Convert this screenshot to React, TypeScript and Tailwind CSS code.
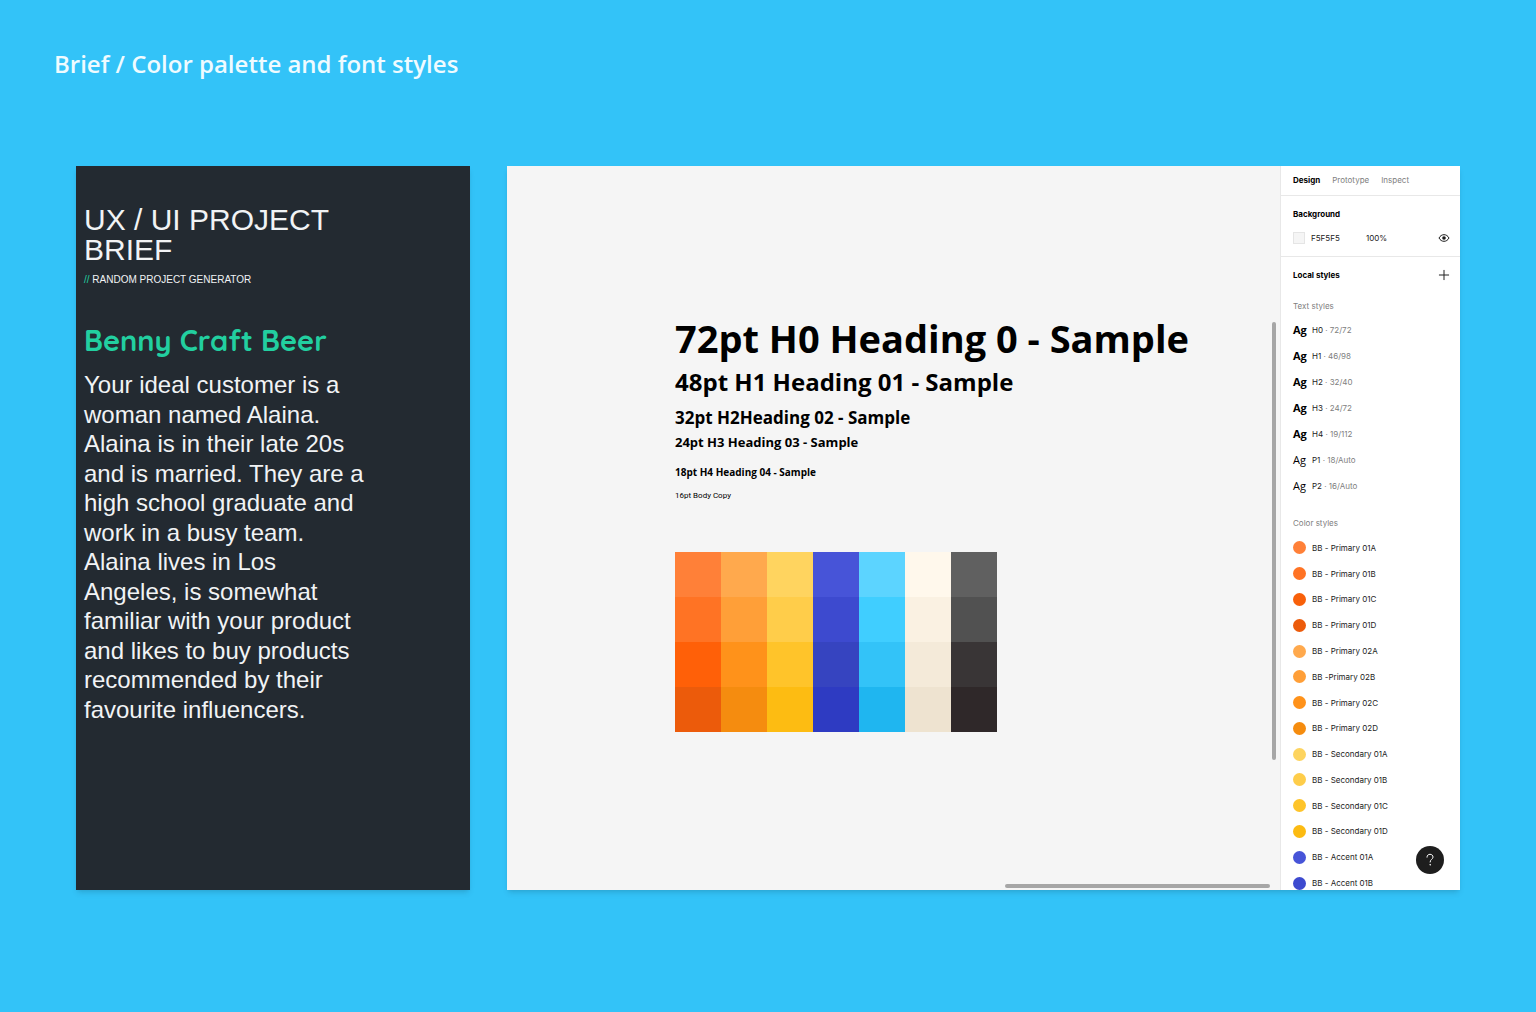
import { Plus } from 'lucide-react';

interface TextStyle {
  name: string;
  size: string;
  weight: string;
}

interface ColorStyle {
  name: string;
  color: string;
}

const textStyles: TextStyle[] = [
  { name: 'H0', size: '72/72', weight: 'font-bold' },
  { name: 'H1', size: '46/98', weight: 'font-bold' },
  { name: 'H2', size: '32/40', weight: 'font-bold' },
  { name: 'H3', size: '24/72', weight: 'font-bold' },
  { name: 'H4', size: '19/112', weight: 'font-bold' },
  { name: 'P1', size: '18/Auto', weight: 'font-medium' },
  { name: 'P2', size: '16/Auto', weight: 'font-normal' },
];

const colorStyles: ColorStyle[] = [
  { name: 'BB - Primary 01A', color: 'bg-[#ff8038]' },
  { name: 'BB - Primary 01B', color: 'bg-[#ff7324]' },
  { name: 'BB - Primary 01C', color: 'bg-[#f8600a]' },
  { name: 'BB - Primary 01D', color: 'bg-[#ec5b0b]' },
  { name: 'BB - Primary 02A', color: 'bg-[#ffa94d]' },
  { name: 'BB -Primary 02B', color: 'bg-[#ff9f38]' },
  { name: 'BB - Primary 02C', color: 'bg-[#ff921a]' },
  { name: 'BB - Primary 02D', color: 'bg-[#f58c0f]' },
  { name: 'BB - Secondary 01A', color: 'bg-[#fdd45f]' },
  { name: 'BB - Secondary 01B', color: 'bg-[#fecd4a]' },
  { name: 'BB - Secondary 01C', color: 'bg-[#fec42a]' },
  { name: 'BB - Secondary 01D', color: 'bg-[#fcbb12]' },
  { name: 'BB - Accent 01A', color: 'bg-[#4754d8]' },
  { name: 'BB - Accent 01B', color: 'bg-[#3d4acf]' },
];

// one entry per column, light to dark
const palette = [
  ['bg-[#ff8038]', 'bg-[#ff7324]', 'bg-[#ff6008]', 'bg-[#ec5b0b]'],
  ['bg-[#ffa94d]', 'bg-[#ff9f38]', 'bg-[#ff921a]', 'bg-[#f58c0f]'],
  ['bg-[#ffd45f]', 'bg-[#ffcd4a]', 'bg-[#ffc42a]', 'bg-[#fdbc12]'],
  ['bg-[#4754d8]', 'bg-[#3d4acf]', 'bg-[#3644c0]', 'bg-[#2e3bc2]'],
  ['bg-[#5cd4ff]', 'bg-[#40ceff]', 'bg-[#33c3f8]', 'bg-[#1fb6f0]'],
  ['bg-[#fff8ec]', 'bg-[#faf1e2]', 'bg-[#f4ead9]', 'bg-[#eee3d0]'],
  ['bg-[#606060]', 'bg-[#515151]', 'bg-[#393536]', 'bg-[#2f2829]'],
];

function EyeIcon() {
  return (
    <svg width="12" height="10" viewBox="0 0 12 10" fill="none" aria-hidden="true">
      <path d="M1 5C2.2 2.8 3.9 1.7 6 1.7S9.8 2.8 11 5C9.8 7.2 8.1 8.3 6 8.3S2.2 7.2 1 5Z" stroke="#1a1a1a" />
      <circle cx="6" cy="5" r="1.8" fill="#1a1a1a" />
    </svg>
  );
}

function HelpIcon() {
  return (
    <svg width="10" height="14" viewBox="0 0 10 14" fill="none" stroke="#fff" strokeLinecap="round" aria-hidden="true">
      <path d="M2 4.2C2 2.4 3.2 1.3 5 1.3S8 2.5 8 4.1C8 6.3 5.1 6.3 5.1 9" />
      <circle cx="5.1" cy="11.8" r="0.3" strokeWidth="0.8" />
    </svg>
  );
}

function BriefPanel() {
  return (
    <section className="bg-[#232a31] px-2 pt-[39px] font-['Liberation_Sans',sans-serif] text-[#f1f3f5] shadow-md">
      <div className="max-w-70">
        <h2 className="text-[30px] leading-[30px]">UX / UI PROJECT BRIEF</h2>
        <p className="mt-[9px] text-[10px] leading-3">
          <span className="text-[#22cfa0]">//</span> RANDOM PROJECT GENERATOR
        </p>
        <h3 className="mt-[34px] font-['Quicksand',Lato,sans-serif] text-[29px] leading-10 font-bold text-[#22cfa0]">
          Benny Craft Beer
        </h3>
        <p className="mt-[10px] text-2xl leading-[1.23]">
          Your ideal customer is a woman named Alaina. Alaina is in their late 20s and is married. They are a high
          school graduate and work in a busy team. Alaina lives in Los Angeles, is somewhat familiar with your product
          and likes to buy products recommended by their favourite influencers.
        </p>
      </div>
    </section>
  );
}

function Canvas() {
  return (
    <div className="relative min-w-0 flex-1 pt-[148px] pl-[168px] whitespace-nowrap text-black">
      <h2 className="text-[38px] leading-12 font-bold">72pt H0 Heading 0 - Sample</h2>
      <h3 className="mt-1 text-2xl leading-8 font-bold">48pt H1 Heading 01 - Sample</h3>
      <h4 className="mt-2 text-[17px] leading-6 font-bold">32pt H2Heading 02 - Sample</h4>
      <h5 className="mt-0.5 text-[13px] leading-5 font-bold">24pt H3 Heading 03 - Sample</h5>
      <h6 className="mt-3 text-[10px] leading-4 font-bold">18pt H4 Heading 04 - Sample</h6>
      <p className="mt-2 font-['Roboto',sans-serif] text-[8px] leading-4">16pt Body Copy</p>

      <div className="mt-12 flex w-[322px]">
        {palette.map((column) => (
          <div key={column[0]} className="flex-1">
            {column.map((shade) => (
              <div key={shade} className={`h-[45px] ${shade}`} />
            ))}
          </div>
        ))}
      </div>

      {/* Scrollbars */}
      <div className="absolute top-[156px] right-1 h-[438px] w-1 rounded-full bg-[#a6a6a6]" />
      <div className="absolute right-[10px] bottom-0.5 h-1 w-[265px] rounded-full bg-[#a6a6a6]" />
    </div>
  );
}

function StylesSidebar() {
  return (
    <aside className="relative flex w-[180px] flex-col overflow-hidden border-l border-[#e8e8e8] bg-white font-['Inter',sans-serif] text-[8px] leading-3 text-[#222]">
      <nav className="flex gap-3 border-b border-[#e8e8e8] px-3 pt-2 pb-[9px] text-[#808080]">
        <button className="font-bold text-black">Design</button>
        <button>Prototype</button>
        <button>Inspect</button>
      </nav>

      <div className="border-b border-[#e8e8e8] px-3 pt-3 pb-3">
        <h4 className="font-bold text-black">Background</h4>
        <div className="mt-3 flex items-center">
          <span className="size-3 border border-[#e5e5e5] bg-[#f5f5f5]" />
          <span className="ml-[6px] w-[55px]">F5F5F5</span>
          <span>100%</span>
          <button className="-mr-0.5 ml-auto" aria-label="Toggle background">
            <EyeIcon />
          </button>
        </div>
      </div>

      <div className="flex items-center justify-between px-3 pt-[10px]">
        <h4 className="font-bold text-black">Local styles</h4>
        <button className="-mr-1" aria-label="Add style">
          <Plus size={16} strokeWidth={1.5} />
        </button>
      </div>

      <h5 className="mt-[17px] px-3 text-[#808080]">Text styles</h5>
      <ul className="mt-[5px] px-3">
        {textStyles.map((style) => (
          <li key={style.name} className="flex h-[26px] items-center">
            <span className={`w-[19px] font-['Open_Sans',sans-serif] text-[11px] text-black ${style.weight}`}>Ag</span>
            <span>
              {style.name} <span className="text-[#808080]">· {style.size}</span>
            </span>
          </li>
        ))}
      </ul>

      <h5 className="mt-[18px] px-3 text-[#808080]">Color styles</h5>
      {/* Last row is cut off by the panel edge */}
      <ul className="mt-[6px] -mb-[6px] flex flex-1 flex-col px-3">
        {colorStyles.map((style) => (
          <li key={style.name} className="flex flex-1 items-center gap-[6px]">
            <span className={`size-[13px] rounded-full ${style.color}`} />
            {style.name}
          </li>
        ))}
      </ul>

      <button
        className="absolute right-4 bottom-4 flex size-7 items-center justify-center rounded-full bg-[#1e1e1e]"
        aria-label="Help"
      >
        <HelpIcon />
      </button>
    </aside>
  );
}

export default function App() {
  return (
    <div className="flex min-h-screen flex-col bg-[#33c3f8] font-['Open_Sans',sans-serif]">
      <header className="px-[54px] pt-12">
        <h1 className="text-2xl leading-8 font-semibold text-[#effbff]">Brief / Color palette and font styles</h1>
      </header>

      <main className="mt-[86px] grid flex-1 grid-cols-[394fr_953fr] gap-[37px] px-[76px] pb-[122px]">
        <BriefPanel />
        <section className="flex bg-[#f5f5f5] shadow-md">
          <Canvas />
          <StylesSidebar />
        </section>
      </main>
    </div>
  );
}
